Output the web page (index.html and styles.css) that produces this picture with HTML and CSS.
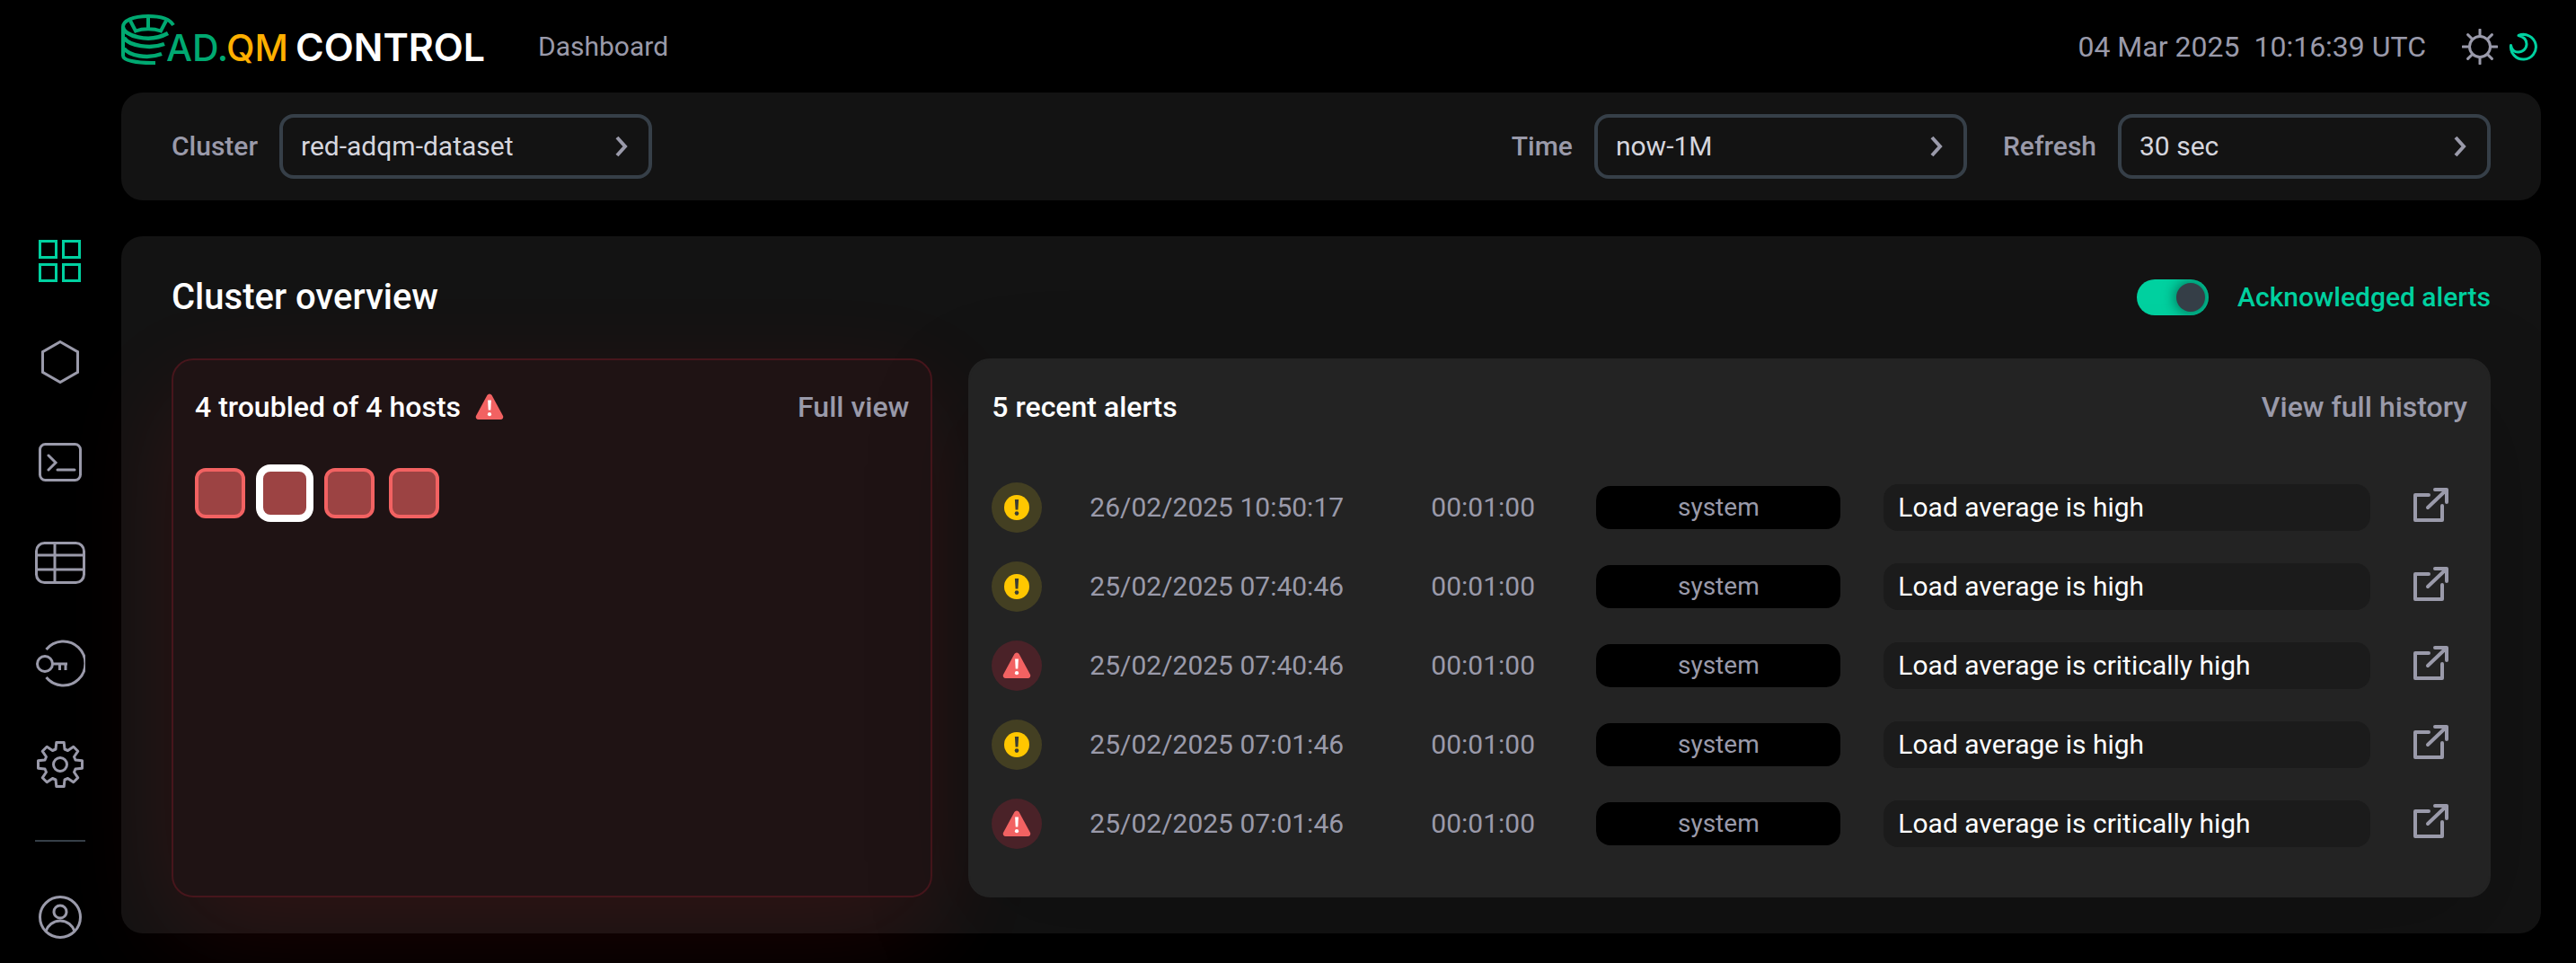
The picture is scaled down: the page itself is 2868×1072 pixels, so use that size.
FILE: index.html
```
<!DOCTYPE html>
<html lang="en">
<head>
    <meta charset="UTF-8">
    <meta name="viewport" content="width=device-width, initial-scale=1.0">
    <title>AD.QM Control - Dashboard</title>
    <link rel="stylesheet" href="styles.css">
</head>
<body>
    <!-- shared icons -->
    <svg class="sprite" aria-hidden="true">
        <symbol id="icon-critical" viewBox="0 0 32 30">
            <path d="M13.4 2.1a3 3 0 0 1 5.2 0l12.3 22.6a3 3 0 0 1-2.6 4.4H3.7a3 3 0 0 1-2.6-4.4z" fill="#f26262"/>
            <path d="M14.1 7.5h3.8l-.6 11h-2.6z" fill="#fff"/>
            <circle cx="16" cy="23.2" r="2.1" fill="#fff"/>
        </symbol>
        <symbol id="icon-warning" viewBox="0 0 28 28">
            <circle cx="14" cy="14" r="14" fill="#ffc700"/>
            <path d="M11.9 5h4.2l-.7 11.5h-2.8z" fill="#3b3d33"/>
            <circle cx="14" cy="20.6" r="2.3" fill="#3b3d33"/>
        </symbol>
        <symbol id="icon-external" viewBox="0 0 40 40">
            <path d="M17 8H2v28h30V20M16 22L36 3M24 2h13v14" fill="none" stroke="currentColor" stroke-width="4" stroke-linejoin="round" stroke-linecap="round"/>
        </symbol>
        <symbol id="icon-chevron" viewBox="0 0 16 24">
            <path d="M3 2l9 10-9 10" fill="none" stroke="currentColor" stroke-width="4"/>
        </symbol>
    </svg>

    <nav class="sidebar" aria-label="Main">
        <a href="#dashboard" class="active" aria-label="Dashboard">
            <svg viewBox="0 0 56 56"><path d="M5.500 5.500h18v18h-18zM31.500 5.500h18v18h-18zM5.500 31.500h18v18h-18zM31.500 31.500h18v18h-18z"/></svg>
        </a>
        <a href="#clusters" aria-label="Clusters">
            <svg viewBox="0 0 56 56"><path d="M28 5.500l19.500 11.200v22.600L28 50.500 8.500 39.300V16.700z"/></svg>
        </a>
        <a href="#queries" aria-label="Queries">
            <svg viewBox="0 0 56 56"><rect x="5.500" y="7.500" width="45" height="40" rx="6"/><path d="M15 20l8 8-8 8M25 36h19" stroke-linecap="round"/></svg>
        </a>
        <a href="#tables" aria-label="Tables">
            <svg viewBox="0 0 56 56"><rect x="1.500" y="5.500" width="53" height="44" rx="9"/><path d="M22 5.500v44M1.500 19h53M1.500 35h53"/></svg>
        </a>
        <a href="#access" aria-label="Access">
            <svg viewBox="0 0 56 56"><path d="M12.500 12A24.500 24.500 0 1 1 12.500 43"/><circle cx="11" cy="28" r="8.500"/><path d="M19.500 28H36M27.500 28v7M34 28v7"/></svg>
        </a>
        <a href="#settings" aria-label="Settings">
            <svg viewBox="0 0 56 56"><circle cx="28" cy="28" r="7.500"/><path d="M23.800 3.500h8.400L33 11l3.500 1.500 6.300-4.300 5 5-4.300 6.300L45 23l7.500.8v8.400L45 33l-1.500 3.500 4.300 6.300-5 5-6.300-4.300L33 45l-.8 7.500h-8.400L23 45l-3.500-1.500-6.300 4.300-5-5 4.300-6.300L11 33l-7.500-.8v-8.400L11 23l1.500-3.500-4.300-6.300 5-5 6.300 4.300L23 11z" stroke-linejoin="round"/></svg>
        </a>
        <hr>
        <a href="#profile" aria-label="Profile">
            <svg viewBox="0 0 56 56"><circle cx="28" cy="28" r="22.500"/><circle cx="28" cy="22" r="7"/><path d="M12 43.500c2-6 8-11.500 16-11.500s14 5.500 16 11.500"/></svg>
        </a>
    </nav>

    <div class="page">
        <header class="topbar">
            <a href="#dashboard" class="logo" aria-label="AD.QM CONTROL">
                <svg viewBox="0 0 408 72">
                    <g fill="none" stroke="#00a971" stroke-width="4">
                        <path d="M58 12C54 5 43 2 30 2 13 2 2 7 2 14v32c0 5 14 8.500 36 8"/>
                        <path d="M10 7l6 11.500c8-3 20-3 28 0L50 7M30 2v13"/>
                        <path d="M2 14c0 9 28 19 50 7M3 26c6 9 29 13 45 7M3 38c6 8 26 12 42 6" stroke-width="4.500"/>
                    </g>
                    <text class="logo-ad" x="50" y="52">AD.</text>
                    <text class="logo-qm" x="117" y="52">QM</text>
                    <text class="logo-control" x="194" y="52">CONTROL</text>
                </svg>
            </a>
            <span class="page-name">Dashboard</span>
            <div class="clock"><span>04 Mar 2025</span><span>10:16:39 UTC</span></div>
            <div class="theme">
                <button type="button" class="theme-light" aria-label="Light theme">
                    <svg viewBox="0 0 40 40"><circle cx="20" cy="20" r="11.500"/><path d="M20 1v7M20 32v7M1 20h7M32 20h7M6.600 6.600l4.700 4.700M28.700 28.700l4.700 4.700M6.600 33.400l4.700-4.700M28.700 11.300l4.700-4.700" stroke-linecap="round"/></svg>
                </button>
                <button type="button" class="theme-dark" aria-label="Dark theme">
                    <svg viewBox="0 0 32 32"><path d="M11 3.500A14 13.800 0 1 1 2.500 14.500c1 5 4 7.500 8 7.500 5.500 0 9.500-4 9.500-9 0-4.500-3-8-9-9.500z" stroke-linejoin="round"/></svg>
                </button>
            </div>
        </header>

        <section class="filters">
            <div class="field">
                <label for="cluster">Cluster</label>
                <div class="select">
                    <select id="cluster"><option>red-adqm-dataset</option></select>
                    <svg><use href="#icon-chevron"/></svg>
                </div>
            </div>
            <div class="field field-time">
                <label for="time">Time</label>
                <div class="select">
                    <select id="time"><option>now-1M</option></select>
                    <svg><use href="#icon-chevron"/></svg>
                </div>
            </div>
            <div class="field">
                <label for="refresh">Refresh</label>
                <div class="select">
                    <select id="refresh"><option>30 sec</option></select>
                    <svg><use href="#icon-chevron"/></svg>
                </div>
            </div>
        </section>

        <main class="overview">
            <div class="overview-head">
                <h1>Cluster overview</h1>
                <label class="switch"><input type="checkbox" checked>Acknowledged alerts</label>
            </div>

            <div class="cards">
                <section class="card card-hosts">
                    <div class="card-head">
                        <h2>4 troubled of 4 hosts <svg><use href="#icon-critical"/></svg></h2>
                        <a href="#hosts">Full view</a>
                    </div>
                    <div class="hosts">
                        <button type="button" class="host" aria-label="Host 1"></button>
                        <button type="button" class="host selected" aria-label="Host 2"></button>
                        <button type="button" class="host" aria-label="Host 3"></button>
                        <button type="button" class="host" aria-label="Host 4"></button>
                    </div>
                </section>

                <section class="card card-alerts">
                    <div class="card-head">
                        <h2>5 recent alerts</h2>
                        <a href="#history">View full history</a>
                    </div>
                    <table class="alerts">
                        <colgroup>
                            <col class="col-level"><col class="col-date"><col class="col-duration"><col class="col-source"><col><col class="col-link">
                        </colgroup>
                        <tbody>
                            <tr>
                                <td><span class="level warning"><svg><use href="#icon-warning"/></svg></span></td>
                                <td>26/02/2025 10:50:17</td>
                                <td>00:01:00</td>
                                <td><span class="source">system</span></td>
                                <td><span class="message">Load average is high</span></td>
                                <td><a href="#alert-1" aria-label="Open alert"><svg><use href="#icon-external"/></svg></a></td>
                            </tr>
                            <tr>
                                <td><span class="level warning"><svg><use href="#icon-warning"/></svg></span></td>
                                <td>25/02/2025 07:40:46</td>
                                <td>00:01:00</td>
                                <td><span class="source">system</span></td>
                                <td><span class="message">Load average is high</span></td>
                                <td><a href="#alert-2" aria-label="Open alert"><svg><use href="#icon-external"/></svg></a></td>
                            </tr>
                            <tr>
                                <td><span class="level critical"><svg><use href="#icon-critical"/></svg></span></td>
                                <td>25/02/2025 07:40:46</td>
                                <td>00:01:00</td>
                                <td><span class="source">system</span></td>
                                <td><span class="message">Load average is critically high</span></td>
                                <td><a href="#alert-3" aria-label="Open alert"><svg><use href="#icon-external"/></svg></a></td>
                            </tr>
                            <tr>
                                <td><span class="level warning"><svg><use href="#icon-warning"/></svg></span></td>
                                <td>25/02/2025 07:01:46</td>
                                <td>00:01:00</td>
                                <td><span class="source">system</span></td>
                                <td><span class="message">Load average is high</span></td>
                                <td><a href="#alert-4" aria-label="Open alert"><svg><use href="#icon-external"/></svg></a></td>
                            </tr>
                            <tr>
                                <td><span class="level critical"><svg><use href="#icon-critical"/></svg></span></td>
                                <td>25/02/2025 07:01:46</td>
                                <td>00:01:00</td>
                                <td><span class="source">system</span></td>
                                <td><span class="message">Load average is critically high</span></td>
                                <td><a href="#alert-5" aria-label="Open alert"><svg><use href="#icon-external"/></svg></a></td>
                            </tr>
                        </tbody>
                    </table>
                </section>
            </div>
        </main>
    </div>
</body>
</html>
```
FILE: styles.css
```
* {
    box-sizing: border-box;
}

body {
    margin: 0;
    min-height: 100vh;
    display: grid;
    grid-template-columns: 135px minmax(0, 1fr);
    background: #000;
    color: #9a9aaa;
    font-family: Roboto, "Liberation Sans", sans-serif;
    font-size: 30px;
    line-height: 44px;
}

a {
    color: inherit;
    text-decoration: none;
}

button {
    padding: 0;
    border: none;
    background: none;
    color: inherit;
    cursor: pointer;
}

svg {
    display: block;
}

.sprite {
    position: absolute;
    width: 0;
    height: 0;
}

/* Sidebar */
.sidebar {
    display: flex;
    flex-direction: column;
    align-items: flex-start;
    gap: 56px;
    padding: 263px 0 0 39px;
}

.sidebar svg {
    width: 56px;
    height: 56px;
    fill: none;
    stroke: currentColor;
    stroke-width: 3;
}

.sidebar .active {
    color: #00d1a0;
}

.sidebar hr {
    width: 56px;
    height: 2px;
    margin: 0;
    border: none;
    background: #363f48;
}

.page {
    padding: 0 39px 32px 0;
}

/* Top bar */
.topbar {
    display: flex;
    align-items: center;
    height: 103px;
}

.logo svg {
    width: 408px;
    height: 72px;
}

.logo text {
    font-family: Inter, "Liberation Sans", sans-serif;
    font-size: 41px;
    font-weight: 500;
}

.logo .logo-ad {
    fill: #00a971;
}

.logo .logo-qm {
    fill: #ffb000;
}

.logo .logo-control {
    fill: #fff;
    font-size: 43px;
    font-weight: 600;
}

.page-name {
    margin-left: 56px;
}

.clock {
    display: flex;
    gap: 16px;
    margin-left: auto;
    font-size: 32px;
}

.theme {
    display: flex;
    align-items: center;
    gap: 12px;
    margin: 0 4px 0 40px;
}

.theme svg {
    width: 40px;
    height: 40px;
    fill: none;
    stroke: currentColor;
    stroke-width: 3;
}

.theme-dark svg {
    width: 32px;
    height: 32px;
    color: #00d1a0;
}

/* Filters */
.filters {
    display: flex;
    gap: 40px;
    padding: 24px 56px;
    border-radius: 24px;
    background: #131313;
    font-weight: 500;
}

.field {
    display: flex;
    align-items: center;
    gap: 24px;
}

.field-time {
    margin-left: auto;
}

.select {
    position: relative;
    width: 415px;
}

.select select {
    width: 100%;
    height: 72px;
    padding: 0 20px;
    border: 4px solid #363f48;
    border-radius: 16px;
    background: #131313;
    color: #d6d6de;
    font: inherit;
    font-weight: 400;
    appearance: none;
}

.select svg {
    position: absolute;
    top: 24px;
    right: 26px;
    width: 16px;
    height: 24px;
    pointer-events: none;
}

/* Overview */
.overview {
    margin-top: 40px;
    padding: 48px 56px 40px;
    border-radius: 24px;
    background: #131313;
}

.overview-head {
    display: flex;
    justify-content: space-between;
    align-items: center;
    height: 40px;
    margin-bottom: 48px;
}

h1,
h2 {
    margin: 0;
    color: #fff;
    font-weight: 500;
}

h1 {
    font-size: 40px;
}

h2 {
    font-size: 32px;
}

.switch {
    display: flex;
    align-items: center;
    gap: 32px;
    color: #00d1a0;
    font-weight: 500;
}

.switch input {
    width: 80px;
    height: 40px;
    margin: 0;
    padding: 4px;
    border-radius: 20px;
    background: #363f48;
    overflow: hidden;
    appearance: none;
}

.switch input::before {
    content: "";
    display: block;
    width: 32px;
    height: 32px;
    border-radius: 50%;
    background: #363f48;
    box-shadow: 0 0 16px rgba(0, 0, 0, 0.6);
}

.switch input:checked {
    background: #00d1a0;
}

.switch input:checked::before {
    margin-left: auto;
}

.cards {
    display: grid;
    grid-template-columns: minmax(0, 1fr) minmax(0, 2fr);
    gap: 40px;
}

.card {
    padding: 30px 24px 36px;
    border: 2px solid #232323;
    border-radius: 24px;
    background: #232323;
    box-shadow: 0 40px 120px rgba(0, 0, 0, 0.2);
}

.card-hosts {
    border-color: #47161c;
    background: #1f1314;
    box-shadow: 0 40px 120px rgba(255, 30, 30, 0.12);
}

.card-head {
    display: flex;
    justify-content: space-between;
    margin-bottom: 46px;
    font-size: 32px;
    font-weight: 500;
}

.card-head h2 {
    display: flex;
    align-items: center;
    gap: 16px;
}

.card-head svg {
    width: 32px;
    height: 30px;
}

.hosts {
    display: flex;
    flex-wrap: wrap;
    gap: 16px;
}

.host {
    width: 56px;
    height: 56px;
    border: 4px solid #f26262;
    border-radius: 12px;
    background: #9c4343;
}

.host.selected {
    border-color: #fff;
    box-shadow: 0 0 0 4px #fff;
}

/* Alerts */
.alerts {
    width: 100%;
    border-collapse: collapse;
    table-layout: fixed;
}

.col-level {
    width: 109px;
}

.col-date {
    width: 380px;
}

.col-duration {
    width: 184px;
}

.col-source {
    width: 320px;
}

.col-link {
    width: 60px;
}

.alerts td {
    height: 88px;
    padding: 0;
}

.level {
    display: flex;
    align-items: center;
    justify-content: center;
    width: 56px;
    height: 56px;
    border-radius: 50%;
}

.level svg {
    width: 32px;
    height: 30px;
}

.level.warning svg {
    width: 28px;
    height: 28px;
}

.level.warning {
    background: #433f22;
}

.level.critical {
    background: #4a2228;
}

.source,
.message {
    display: block;
    margin-right: 48px;
    border-radius: 16px;
}

.source {
    background: #000;
    font-size: 28px;
    line-height: 48px;
    text-align: center;
}

.message {
    padding-left: 16px;
    background: #1b1b1b;
    color: #fff;
    line-height: 52px;
}

.alerts a svg {
    width: 40px;
    height: 40px;
    margin-bottom: 4px;
}
```
